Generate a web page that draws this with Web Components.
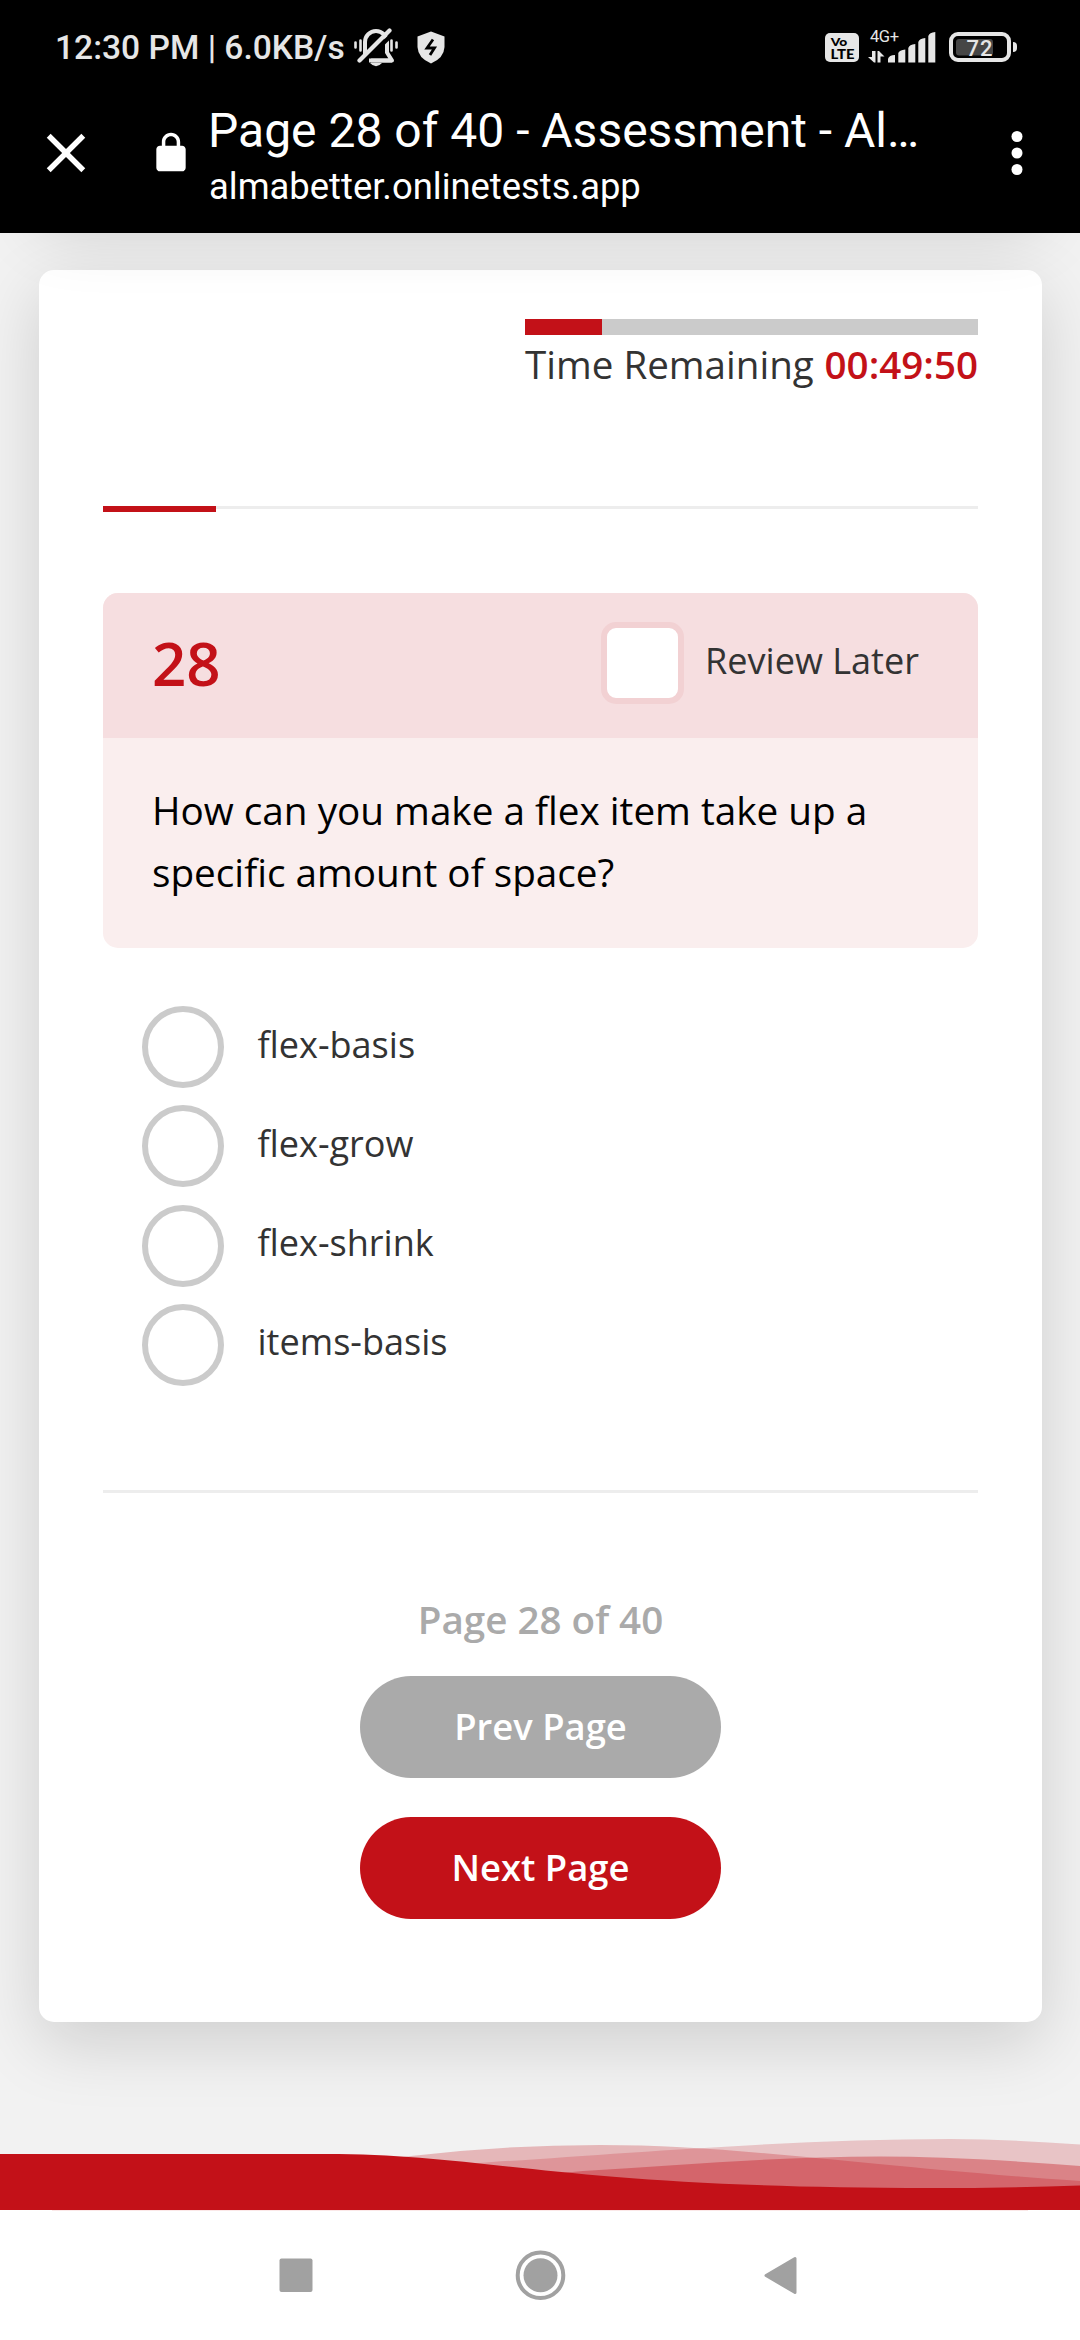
<!DOCTYPE html>
<html lang="en">
<head>
<meta charset="utf-8">
<title>Page 28 of 40 - Assessment</title>
<style>
  html, body { margin: 0; padding: 0; }
  body { width: 1080px; height: 2340px; overflow: hidden; font-family: "Open Sans", sans-serif; }
</style>
</head>
<body>
<phone-screen>
  <status-bar slot="top" clock="12:30 PM | 6.0KB/s" battery="72"></status-bar>
  <browser-bar slot="top" heading="Page 28 of 40 - Assessment - Al…" host-name="almabetter.onlinetests.app"></browser-bar>
  <test-card>
    <test-timer slot="timer" label="Time Remaining" time="00:49:50"></test-timer>
    <question-box slot="question" number="28">How can you make a flex item take up a specific amount of space?</question-box>
    <answer-option slot="answers">flex-basis</answer-option>
    <answer-option slot="answers">flex-grow</answer-option>
    <answer-option slot="answers">flex-shrink</answer-option>
    <answer-option slot="answers">items-basis</answer-option>
    <span slot="pager-text">Page 28 of 40</span>
    <pill-button slot="buttons" tone="muted">Prev Page</pill-button>
    <pill-button slot="buttons">Next Page</pill-button>
  </test-card>
  <wave-footer></wave-footer>
  <nav-bar slot="bottom"></nav-bar>
</phone-screen>
<script>
const define = (name, render) => customElements.define(name, class extends HTMLElement {
  connectedCallback() {
    if (this.shadowRoot) return;
    this.attachShadow({ mode: "open" }).innerHTML = render(this);
  }
});

define("phone-screen", () => `
<style>
  :host { display: flex; flex-direction: column; width: 1080px; height: 2340px; background: #f2f2f2; }
  main { flex: 1; display: flex; flex-direction: column; overflow: hidden; background: #f2f2f2; }
  .previous { flex: none; height: 100px; margin: -125px 38px 62px 39px; border-radius: 15px;
    box-shadow: 0 21px 68px rgba(0,0,0,.15); z-index: 1; }
</style>
<slot name="top"></slot>
<main><div class="previous"></div><slot></slot></main>
<slot name="bottom"></slot>`);

define("status-bar", el => `
<style>
  :host { display: flex; align-items: center; height: 95px; box-sizing: border-box; padding: 0 62px 0 55px;
    background: #000; color: #e6e6e6; font-family: Roboto, sans-serif; }
  .clock { font-size: 33.600px; font-weight: 500; line-height: 40px; padding-top: 1px; white-space: pre; width: 298px; }
  svg { display: block; flex: none; }
  .bell { margin-right: 19px; }
  .right { margin-left: auto; display: flex; align-items: center; }
</style>
<span class="clock">${el.getAttribute("clock")}</span>
<svg class="bell" width="45" height="40" viewBox="353 28 45 40" fill="none" stroke="#e6e6e6">
  <path d="M371 60.500H392L387 52.500V42a11 11 0 0 0-22 0V54" stroke-width="4" stroke-linejoin="round"/>
  <path d="M363 63.500L392.500 34" stroke="#000" stroke-width="4"/>
  <path d="M369 60.500H392" stroke-width="4"/>
  <path d="M359.500 60.500L389.500 30.500" stroke-width="4.200" stroke-linecap="round"/>
  <path d="M355.500 42.500v5M360.500 40.500v10M391.500 40.500v10M396.500 42.500v5" stroke-width="2.600" stroke-linecap="round"/>
  <path d="M370 63H382Q376 69.500 370 63Z" fill="#e6e6e6" stroke="none"/>
</svg>
<svg width="28" height="34" viewBox="417 31 28 34">
  <path d="M431 31.500L444.500 36.500V47Q444 58 431 63.500Q418 58 417.500 47V36.500Z" fill="#e6e6e6"/>
  <path d="M433 39.500L427 48H434.500L430 55" fill="none" stroke="#000" stroke-width="2.800"/>
</svg>
<div class="right">
<svg width="193" height="40" viewBox="825 28 193 40" fill="#e6e6e6" font-family="Roboto, sans-serif">
  <rect x="825" y="33" width="34" height="29" rx="5"/>
  <g fill="#000" font-family="Lato, sans-serif" font-weight="900">
    <text x="830.800" y="46.200" font-size="11.300" textLength="16.500" lengthAdjust="spacingAndGlyphs">Vo</text>
    <text x="830.500" y="58.600" font-size="12.500" textLength="24" lengthAdjust="spacingAndGlyphs">LTE</text>
  </g>
  <text x="870" y="42.300" font-size="16.500" textLength="29">4G+</text>
  <path d="M872 51h3.500v11.500h-1.500l-6-5.500h4zM877.500 62.500h3v-6h4l-5.500-5.500h-1.500z"/>
  <path d="M888 62.500V59q1-4 7-4v7.500zM898.300 62.500V53q1-3 7-3.500v13zM908.300 62.500V48q1-3.500 7-4v18.500zM918.300 62.500V42q1-3.500 7-4v24.500zM928.300 62.500V36q1-3.500 7-4v30.500z"/>
  <rect x="951" y="34" width="58" height="26" rx="7" fill="none" stroke="#e6e6e6" stroke-width="4"/>
  <rect x="956" y="39" width="37" height="16.500" rx="3" fill="#464646"/>
  <text x="966.500" y="55.800" font-size="22" font-weight="500" textLength="26">${el.getAttribute("battery")}</text>
  <path d="M1013 42q4 0 4 4v2q0 4-4 4z"/>
</svg>
</div>`);

define("browser-bar", el => `
<style>
  :host { display: flex; height: 138px; box-sizing: border-box; padding: 0 30px 22px 33px; background: #000; color: #fff;
    font-family: Roboto, sans-serif; align-items: center; }
  svg { display: block; flex: none; fill: #fff; }
  .lock { margin: 0 15px 0 50px; }
  .text { flex: 1; align-self: flex-start; padding-top: 6px; white-space: nowrap; }
  .heading { font-size: 48px; line-height: 60px; }
  .host { font-size: 36.400px; line-height: 52px; padding-left: 1px; }
</style>
<svg width="66" height="66" viewBox="0 0 24 24"><path d="M19 6.410L17.590 5 12 10.590 6.410 5 5 6.410 10.590 12 5 17.590 6.410 19 12 13.410 17.590 19 19 17.590 13.410 12z"/></svg>
<svg class="lock" width="44" height="44" viewBox="0 0 24 24"><path d="M18 8h-1V6c0-2.760-2.240-5-5-5S7 3.240 7 6v2H6c-1.100 0-2 .900-2 2v10c0 1.100.900 2 2 2h12c1.100 0 2-.900 2-2V10c0-1.100-.900-2-2-2zM8.900 8V6c0-1.710 1.390-3.100 3.100-3.100s3.100 1.390 3.100 3.100v2z"/></svg>
<div class="text">
  <div class="heading">${el.getAttribute("heading")}</div>
  <div class="host">${el.getAttribute("host-name")}</div>
</div>
<svg width="66" height="66" viewBox="0 0 24 24"><circle cx="12" cy="6" r="2"/><circle cx="12" cy="12" r="2"/><circle cx="12" cy="18" r="2"/></svg>`);

define("test-card", () => `
<style>
  :host { flex: none; display: flex; flex-direction: column; box-sizing: border-box; margin: 0 38px 0 39px; padding: 49px 64px 0;
    height: 1752px; border-radius: 15px; background: #fff; box-shadow: 0 21px 68px rgba(0,0,0,.15); }
  .timer { display: flex; justify-content: flex-end; height: 187px; }
  .progress { height: 6px; display: flex; align-items: flex-start; }
  .done { width: 113px; height: 6px; background: #c31118; }
  .rest { flex: 1; height: 3px; background: #ededed; }
  .question { margin-top: 81px; }
  .answers { display: flex; flex-direction: column; gap: 17.330px; padding: 58px 0 0 39px; }
  hr { width: 100%; height: 3px; margin: 104px 0 0; border: 0; background: #ededed; }
  .pager { display: flex; flex-direction: column; align-items: center; padding-top: 100px; }
  .pages { height: 52px; line-height: 52px; margin-bottom: 31px; font-size: 38.600px; font-weight: 600; color: #aaa; }
  .buttons { display: flex; flex-direction: column; gap: 39px; }
</style>
<div class="timer"><slot name="timer"></slot></div>
<div class="progress"><div class="done"></div><div class="rest"></div></div>
<div class="question"><slot name="question"></slot></div>
<div class="answers"><slot name="answers"></slot></div>
<hr>
<div class="pager">
  <div class="pages"><slot name="pager-text"></slot></div>
  <div class="buttons"><slot name="buttons"></slot></div>
</div>`);

define("test-timer", el => `
<style>
  :host { display: block; width: 453px; color: #333; }
  .bar { height: 16px; background: #cbcbcb; }
  .fill { width: 77px; height: 16px; background: #c31118; }
  .text { display: flex; justify-content: space-between; margin-top: 3px; font-size: 38.600px; line-height: 52px; white-space: nowrap; }
  b { font-weight: 600; color: #c31118; }
</style>
<div class="bar"><div class="fill"></div></div>
<div class="text"><span>${el.getAttribute("label")}</span><b>${el.getAttribute("time")}</b></div>`);

define("question-box", el => `
<style>
  :host { display: block; height: 355px; border-radius: 15px; overflow: hidden; background: #faeeee; }
  header { display: flex; align-items: center; height: 145px; box-sizing: border-box; padding: 0 59px 5px 49px; background: #f6dee0; }
  .number { font-size: 60px; font-weight: 600; line-height: 80px; color: #c31118; }
  .box { box-sizing: border-box; width: 83px; height: 82px; margin: 0 21px 0 auto; border: 6px solid #f2d1d3; border-radius: 15px; background: #fff; }
  label { font-size: 36.100px; line-height: 48px; padding-bottom: 7px; color: #333; }
  p { margin: 0; padding: 41px 49px 0; font-size: 38.700px; line-height: 62px; color: #000; }
</style>
<header><span class="number">${el.getAttribute("number")}</span><span class="box"></span><label>Review Later</label></header>
<p><slot></slot></p>`);

define("answer-option", () => `
<style>
  :host { display: flex; align-items: center; height: 82px; }
  .ring { box-sizing: border-box; width: 82px; height: 82px; border: 6px solid #cbcbcb; border-radius: 50%; margin-right: 33.500px; }
  .text { font-size: 36.100px; line-height: 48px; padding-bottom: 7px; color: #333; }
</style>
<span class="ring"></span><span class="text"><slot></slot></span>`);

define("pill-button", el => `
<style>
  :host { display: flex; justify-content: center; width: 361px; height: 102px; border-radius: 51px;
    background: ${el.getAttribute("tone") === "muted" ? "#aaa" : "#c31118"}; color: #fff; font-size: 36.400px; font-weight: 600; line-height: 100px; }
</style>
<slot></slot>`);

define("wave-footer", () => `
<style>
  :host { display: block; margin-top: auto; flex: none; }
  svg { display: block; }
</style>
<svg width="1080" height="80" viewBox="0 2130 1080 80" fill="#c31118">
  <path fill-opacity=".26" d="M380 2160L411 2156Q505 2145 600 2145C740 2145 860 2166 1080 2181V2210H380Z"/>
  <path fill-opacity=".2" d="M440 2166L492 2162C620 2154 790 2139 950 2139Q1015 2139.500 1080 2144.500V2210H440Z"/>
  <path fill-opacity=".36" d="M540 2175L583 2171C680 2165 780 2156.500 880 2156.500Q960 2156.500 1080 2166V2210H540Z"/>
  <path d="M0 2154H326C490 2154 560 2188 930 2188Q1005 2188 1080 2185.500V2210H0Z"/>
</svg>`);

define("nav-bar", () => `
<style>
  :host { display: flex; justify-content: center; height: 130px; background: #fff; }
  svg { display: block; }
</style>
<svg width="1080" height="130" viewBox="0 2210 1080 130" fill="#a1a1a1">
  <rect x="52" y="2210" width="976" height="1" fill="#fbe8e8"/>
  <rect x="279.500" y="2258.500" width="33" height="33.500" rx="2"/>
  <circle cx="540.500" cy="2275.300" r="22.800" fill="none" stroke="#a1a1a1" stroke-width="4"/>
  <circle cx="540.500" cy="2275.300" r="17"/>
  <path d="M766 2275.500L795 2258.500V2292.500Z" stroke="#a1a1a1" stroke-width="3" stroke-linejoin="round"/>
</svg>`);
</script>
</body>
</html>
